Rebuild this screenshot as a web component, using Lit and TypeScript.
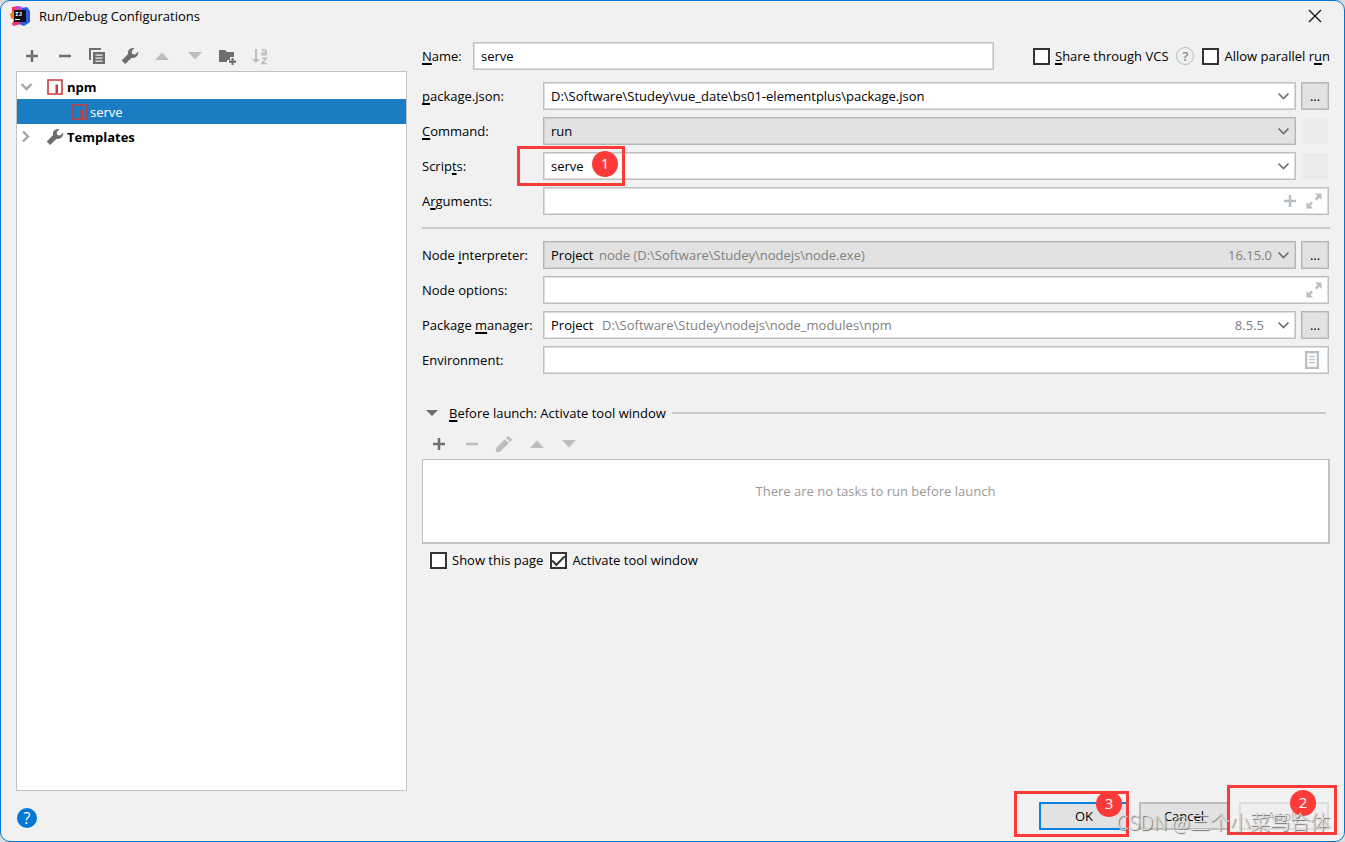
import { LitElement, html, css, svg, nothing } from "lit";
import { customElement, property } from "lit/decorators.js";

const GRAY = "#6e6e6e";
const DIM = "#bdbdbd";
const PALE = "#b7bfc4";

const icons: Record<string, (c: string) => unknown> = {
  add: (c) => svg`<path fill=${c} d="M6.750 2h2.500v4.750H14v2.500H9.250V14h-2.500V9.250H2v-2.500h4.750z"/>`,
  remove: (c) => svg`<path fill=${c} d="M2 6.750h12v2.500H2z"/>`,
  copy: (c) => svg`<path fill=${c} d="M0 0h12v2H2v10H0z"/><path fill=${c} fill-rule="evenodd" d="M4 4h12v12H4zM6.500 6.500v1.200h7V6.500zM6.500 9.500v1.200h7V9.500zM6.500 12.500v1.200h7v-1.200z"/>`,
  wrench: (c) => svg`<path fill=${c} d="M16.200 3.800 13 6.500 10.300 6 9.700 3 12.400.2C10-.5 7.500.4 6.400 2.400c-.6 1.200-.6 2.400-.3 3.600L-.3 12.500 3.200 16 9.600 9.700c1.500.5 3.500.2 4.900-1.100 1.400-1.300 2-3.200 1.700-4.800z"/>`,
  up: (c) => svg`<path fill=${c} d="M1 12 8 4.500l7 7.500z"/>`,
  down: (c) => svg`<path fill=${c} d="M1 4h14l-7 7.500z"/>`,
  folder: (c) => svg`<path fill=${c} d="M0 2h6l2 2h7v5h-4v3H8v2H0z"/><path fill=${c} d="M12.500 10h2v2.500H17v2.200h-2.500V17h-2v-2.300H10v-2.200h2.500z"/>`,
  sort: (c) => svg`<path fill=${c} d="M3 1h2v10h3l-4 4-4-4h3z"/><path fill="none" stroke=${c} stroke-width="1.600" d="M10 2.300c1.400-.9 4.200-.9 4.200 1v4M14.200 4.500c-3-.2-4.400.4-4.400 1.400 0 1.500 3 1.500 4.400 0M10 10.300h4.200L10 15.500h4.600"/>`,
  pencil: (c) => svg`<path fill=${c} d="m-.3 16.300.6-4.600L8.800 3.200l3.900 3.900L4.200 15.700zM10 2 12.200-.2 16.200 3.800 14 6z"/>`,
  npm: () => svg`<path fill="none" stroke="#cb3837" stroke-width="1.600" d="M1 1h14v14H1z"/><path fill="#cb3837" d="M8.500 5.500h2.500V14H8.500z"/>`,
  expand: (c) => svg`<path fill=${c} d="M9 .5h6.500V7l-2.200-2.200-2.600 2.600-1.700-1.700 2.500-2.600zM.5 9l2.200 2.200 2.600-2.600L7 10.300l-2.500 2.500L7 15.500H.5z"/>`,
  doc: (c) => svg`<path fill=${c} fill-rule="evenodd" d="M-1-1h14v18H-1zM1.200 1.200v13.600h9.600V1.200zM3 4h6v1.200H3zM3 7h6v1.200H3zM3 10h6v1.200H3z"/>`,
  chevron: (c) => svg`<path fill="none" stroke=${c} stroke-width="1.600" d="m2.500 5.500 5 5 5-5"/>`,
  treeOpen: (c) => svg`<path fill="none" stroke=${c} stroke-width="2.400" d="m2.500 5 5 5 5-5"/>`,
  treeClosed: (c) => svg`<path fill="none" stroke=${c} stroke-width="2.400" d="m4 2.500 5 5-5 5"/>`,
  collapse: (c) => svg`<path fill=${c} d="M2 5h12l-6 6z"/>`,
  close: (c) => svg`<path fill="none" stroke=${c} stroke-width="1.300" d="m2 2 12 12M14 2 2 14"/>`,
};

const icon = (name: string, color = GRAY, size = 16) => html`<svg
  class="icon" width=${size} height=${size} viewBox="0 0 16 16" overflow="visible" aria-hidden="true">${icons[name](color)}</svg>`;

const controls = css`
  :host { display: block; }
  * { box-sizing: border-box; }
  button, select, input {
    font: inherit; color: inherit; margin: 0; border-radius: 0; outline: none;
  }
  .icon { display: block; flex: none; }
  .tool {
    display: flex; align-items: center; justify-content: center;
    width: 16px; height: 16px; padding: 0; border: 0; background: none;
  }
  u { text-underline-offset: 2px; text-decoration-thickness: 2px; text-decoration-skip-ink: none; }
`;

@customElement("combo-box")
class ComboBox extends LitElement {
  @property() value = "";
  @property() detail = "";
  @property() version = "";
  @property() label = "";
  @property({ type: Boolean, reflect: true }) shaded = false;
  @property({ type: Boolean, reflect: true }) tight = false;

  static styles = [controls, css`
    :host { flex: 1; min-width: 0; }
    .combo { display: grid; height: 28px; border: 1px solid #c0c0c0; box-shadow: inset 0 0 0 1px #dcdcdc; background: #fff; }
    :host([shaded]) .combo { background: #e2e2e2; border-color: #b4b4b4; box-shadow: inset 0 0 0 1px #cecece; }
    select, .over { grid-area: 1 / 1; min-width: 0; }
    select { appearance: none; border: 0; background: none; padding: 0 24px 0 7px; width: 100%; }
    .over {
      display: flex; align-items: center; padding: 0 3px 0 58px;
      color: #808080; pointer-events: none;
    }
    :host([tight]) .over { padding-left: 55px; }
    .version { margin-left: auto; padding-right: 12px; }
    :host([tight]) .version { padding-right: 4px; }
    .arrow { margin-left: auto; }
    .version + .arrow { margin-left: 0; }
  `];

  render() {
    return html`<div class="combo">
      <select aria-label=${this.label}><option>${this.value}</option></select>
      <div class="over">
        <span>${this.detail}</span>
        ${this.version ? html`<span class="version">${this.version}</span>` : nothing}
        <span class="arrow">${icon("chevron")}</span>
      </div>
    </div>`;
  }
}

@customElement("app-root")
class AppRoot extends LitElement {
  static styles = [controls, css`
    :host { font: 13px/18px "Open Sans", "Noto Sans CJK SC", sans-serif; color: #000; background: #dcdcdc; }
    .window {
      position: relative; display: flex; flex-direction: column; min-height: 100vh;
      border: 1px solid #0078d4; border-radius: 10px; background: #f1f1f1;
    }
    .title { display: flex; align-items: center; gap: 9px; height: 30px; padding: 0 21px 0 9px; }
    .title h1 { font: inherit; margin: 0; flex: 1; }
    .body { flex: 1; display: flex; gap: 15px; padding: 10px 14px 0 15px; }
    .side { flex: 0 0 391px; display: flex; flex-direction: column; }
    .tools { display: flex; justify-content: space-between; align-items: center; }
    .side .tools { width: 244px; height: 30px; margin-left: 8px; }
    .tree { flex: 1; margin: 0; padding: 2px 0 0; list-style: none; background: #fff; border: 1px solid #c3c3c3; }
    .node { display: flex; align-items: center; gap: 4px; height: 25px; padding-left: 2px; font-weight: 700; }
    .node .twist { margin-right: 8px; }
    .leaf { padding-left: 55px; gap: 2px; font-weight: 400; background: #1a7dc4; color: #fff; }

    .form { flex: 1; min-width: 0; padding-top: 1px; }
    .row { display: flex; align-items: center; height: 28px; margin-bottom: 7px; position: relative; }
    .row > label { flex: 0 0 121px; }
    .fields { padding-right: 1px; }
    .name-row { margin-bottom: 12px; }
    .name-row > .name-label { flex: 0 0 51px; }
    .text { flex: 1; min-width: 0; height: 28px; border: 1px solid #c0c0c0; box-shadow: inset 0 0 0 1px #dcdcdc; background: #fff; padding: 0 7px; }
    .name-row .options { display: flex; align-items: center; flex: 0 0 297px; margin-left: 39px; justify-content: space-between; }
    .check { display: flex; align-items: center; gap: 5px; white-space: nowrap; }
    .check input {
      appearance: none; width: 17px; height: 17px; border: 2px solid #333; background: #fff;
      display: grid; place-items: center;
    }
    .check input:checked::after {
      content: ""; width: 11px; height: 5px; border: solid #333; border-width: 0 0 2px 2px;
      transform: rotate(-45deg) translate(1px, -1px);
    }
    .hint {
      width: 18px; height: 18px; padding: 0; border: 1px solid #b4bcc2; border-radius: 50%;
      background: none; color: #7f8b91; line-height: 16px; font-weight: 600;
    }
    .more { width: 28px; height: 28px; margin-left: 5px; padding: 0; border: 1px solid #b4b4b4; box-shadow: inset 0 0 0 1px #cecece; background: #e2e2e2; }
    .more:disabled { background: #ebebeb; border-color: #f1f1f1; box-shadow: none; }
    .box { flex: 1; display: flex; align-items: center; gap: 8px; height: 28px; border: 1px solid #c0c0c0; box-shadow: inset 0 0 0 1px #dcdcdc; background: #fff; padding-right: 6px; }
    .box input { flex: 1; min-width: 0; border: 0; background: none; height: 20px; margin-left: 2px; }
    .rule { height: 2px; border: 0; margin: 12px 0; background: #cacaca; }

    .launch { display: flex; align-items: center; height: 18px; margin-top: 30px; padding: 0 4px 0 2px; }
    .launch h2 { font: inherit; margin: 0 6px 0 9px; }
    .launch hr { flex: 1; height: 2px; border: 0; margin: 0; background: #cacaca; }
    .form .tools { width: 146px; margin: 14px 0 7px 9px; }
    .tasks { height: 85px; border: 1px solid #c0c0c0; border-width: 1px 2px 2px 1px; background: #fff; color: #999; text-align: center; padding-top: 22px; }
    .pages { display: flex; gap: 7px; margin: 7px 0 0 8px; }

    .footer { display: flex; align-items: center; gap: 10px; height: 50px; padding: 0 15px 0 16px; }
    .help { width: 20px; height: 20px; padding: 0; border: 0; border-radius: 50%; background: #0078d4; color: #fff; font-size: 16px; line-height: 20px; margin-top: 4px; }
    .spacer { flex: 1; }
    .action { width: 90px; height: 28px; border: 2px solid #bcbcbc; background: #e2e2e2; padding: 0; }
    .primary { border-color: #0a84dc; }
    .action:disabled { background: #efefef; border-color: #dedede; color: #b0b0b0; }

    .mark { position: absolute; border: 3px solid #fc3a3a; pointer-events: none; }
    .badge {
      position: absolute; width: 26px; height: 26px; border-radius: 50%; background: #fc3a3a;
      color: #fff; font-size: 15px; line-height: 24px; text-align: center;
    }
    .mark-scripts { left: 95px; top: -6px; width: 108px; height: 40px; }
    .mark-scripts .badge { right: 4px; top: 2px; }
    .mark-apply { right: 7px; bottom: 6px; width: 110px; height: 50px; }
    .mark-apply .badge { right: 18px; top: 2px; }
    .mark-ok { right: 215px; bottom: 4px; width: 115px; height: 46px; }
    .mark-ok .badge { right: 4px; top: -3px; }
    .watermark {
      position: absolute; right: 14px; bottom: 5px; font-size: 20px; line-height: 28px; white-space: nowrap;
      font-family: "Noto Sans CJK SC", sans-serif; font-weight: 300; color: #dedede;
      text-shadow: 1px 1px 1px #707070; pointer-events: none;
    }
  `];

  private check(label: unknown, checked = false) {
    return html`<label class="check"><input type="checkbox" .checked=${checked}><span>${label}</span></label>`;
  }

  private tool(name: string, label: string, enabled = true) {
    return html`<button class="tool" aria-label=${label} ?disabled=${!enabled}>${icon(name, enabled ? GRAY : DIM)}</button>`;
  }

  private logo() {
    return html`<svg width="20" height="20" viewBox="0 0 20 20" aria-hidden="true">
      <path fill="#fe315d" d="M2 1 9 0l6 5-9 12-4-7z"/>
      <path fill="#f97a12" d="M0 8l4-3 2 10-5-3z"/>
      <path fill="#b04be0" d="m6 0 7 1-6 4z"/>
      <path fill="#2b5de8" d="m12 2 5-1 3 4v11l-6 4-5-2z"/>
      <path fill="#f02f6a" d="m2 18 3-6 6 6-8 2z"/>
      <path fill="#101010" d="M4 4h12v12H4z"/>
      <text x="5" y="10" font-size="6" font-weight="700" font-family="Liberation Mono" fill="#fff">IJ</text>
      <path fill="#fff" d="M5 13h5v1H5z"/>
    </svg>`;
  }

  render() {
    return html`<div class="window">
      <header class="title">
        ${this.logo()}
        <h1>Run/Debug Configurations</h1>
        <button class="tool" aria-label="Close">${icon("close", "#111")}</button>
      </header>

      <main class="body">
        <section class="side">
          <div class="tools">
            ${this.tool("add", "Add")}
            ${this.tool("remove", "Remove")}
            ${this.tool("copy", "Copy")}
            ${this.tool("wrench", "Edit templates")}
            ${this.tool("up", "Move up", false)}
            ${this.tool("down", "Move down", false)}
            ${this.tool("folder", "New folder")}
            ${this.tool("sort", "Sort", false)}
          </div>
          <ul class="tree">
            <li class="node"><span class="twist">${icon("treeOpen", "#a6a6a6")}</span>${icon("npm")}<span>npm</span></li>
            <li class="node leaf">${icon("npm")}<span>serve</span></li>
            <li class="node"><span class="twist">${icon("treeClosed", "#a6a6a6")}</span>${icon("wrench")}<span>Templates</span></li>
          </ul>
        </section>

        <section class="form">
          <div class="row name-row">
            <label class="name-label" for="name"><u>N</u>ame:</label>
            <input class="text" id="name" type="text" .value=${"serve"}>
            <div class="options">
              ${this.check(html`<u>S</u>hare through VCS`)}
              <button class="hint" aria-label="About sharing">?</button>
              ${this.check(html`Allow parallel r<u>u</u>n`)}
            </div>
          </div>

          <div class="fields">
            <div class="row">
              <label for="package"><u>p</u>ackage.json:</label>
              <combo-box id="package" label="package.json" value="D:\\Software\\Studey\\vue_date\\bs01-elementplus\\package.json"></combo-box>
              <button class="more">...</button>
            </div>
            <div class="row">
              <label for="command"><u>C</u>ommand:</label>
              <combo-box id="command" label="Command" value="run" shaded></combo-box>
              <button class="more" aria-label="Browse" disabled></button>
            </div>
            <div class="row">
              <label for="scripts">Scrip<u>t</u>s:</label>
              <combo-box id="scripts" label="Scripts" value="serve"></combo-box>
              <button class="more" aria-label="Browse" disabled></button>
              <div class="mark mark-scripts"><span class="badge">1</span></div>
            </div>
            <div class="row">
              <label for="arguments">A<u>r</u>guments:</label>
              <div class="box">
                <input id="arguments" type="text">
                <button class="tool" aria-label="Insert macro">${icon("add", PALE)}</button>
                <button class="tool" aria-label="Expand">${icon("expand", PALE)}</button>
              </div>
            </div>
          </div>

          <hr class="rule">

          <div class="fields">
            <div class="row">
              <label for="interpreter">Node <u>i</u>nterpreter:</label>
              <combo-box id="interpreter" label="Node interpreter" value="Project" detail="node (D:\\Software\\Studey\\nodejs\\node.exe)" version="16.15.0" shaded tight></combo-box>
              <button class="more">...</button>
            </div>
            <div class="row">
              <label for="options">Node options:</label>
              <div class="box">
                <input id="options" type="text">
                <button class="tool" aria-label="Expand">${icon("expand", PALE)}</button>
              </div>
            </div>
            <div class="row">
              <label for="manager">Package <u>m</u>anager:</label>
              <combo-box id="manager" label="Package manager" value="Project" detail="D:\\Software\\Studey\\nodejs\\node_modules\\npm" version="8.5.5"></combo-box>
              <button class="more">...</button>
            </div>
            <div class="row">
              <label for="environment">Environment:</label>
              <div class="box">
                <input id="environment" type="text">
                <button class="tool" aria-label="Edit variables">${icon("doc", PALE)}</button>
              </div>
            </div>
          </div>

          <div class="launch">
            <button class="tool" aria-label="Collapse">${icon("collapse")}</button>
            <h2><u>B</u>efore launch: Activate tool window</h2>
            <hr>
          </div>
          <div class="tools">
            ${this.tool("add", "Add task")}
            ${this.tool("remove", "Remove task", false)}
            ${this.tool("pencil", "Edit task", false)}
            ${this.tool("up", "Move task up", false)}
            ${this.tool("down", "Move task down", false)}
          </div>
          <div class="tasks">There are no tasks to run before launch</div>
          <div class="pages">
            ${this.check("Show this page")}
            ${this.check("Activate tool window", true)}
          </div>
        </section>
      </main>

      <footer class="footer">
        <button class="help" aria-label="Help">?</button>
        <span class="spacer"></span>
        <button class="action primary">OK</button>
        <button class="action">Cancel</button>
        <button class="action" disabled>Apply</button>
      </footer>

      <div class="mark mark-ok"><span class="badge">3</span></div>
      <div class="mark mark-apply"><span class="badge">2</span></div>
      <div class="watermark">CSDN @三个小菜鸟合体</div>
    </div>`;
  }
}
